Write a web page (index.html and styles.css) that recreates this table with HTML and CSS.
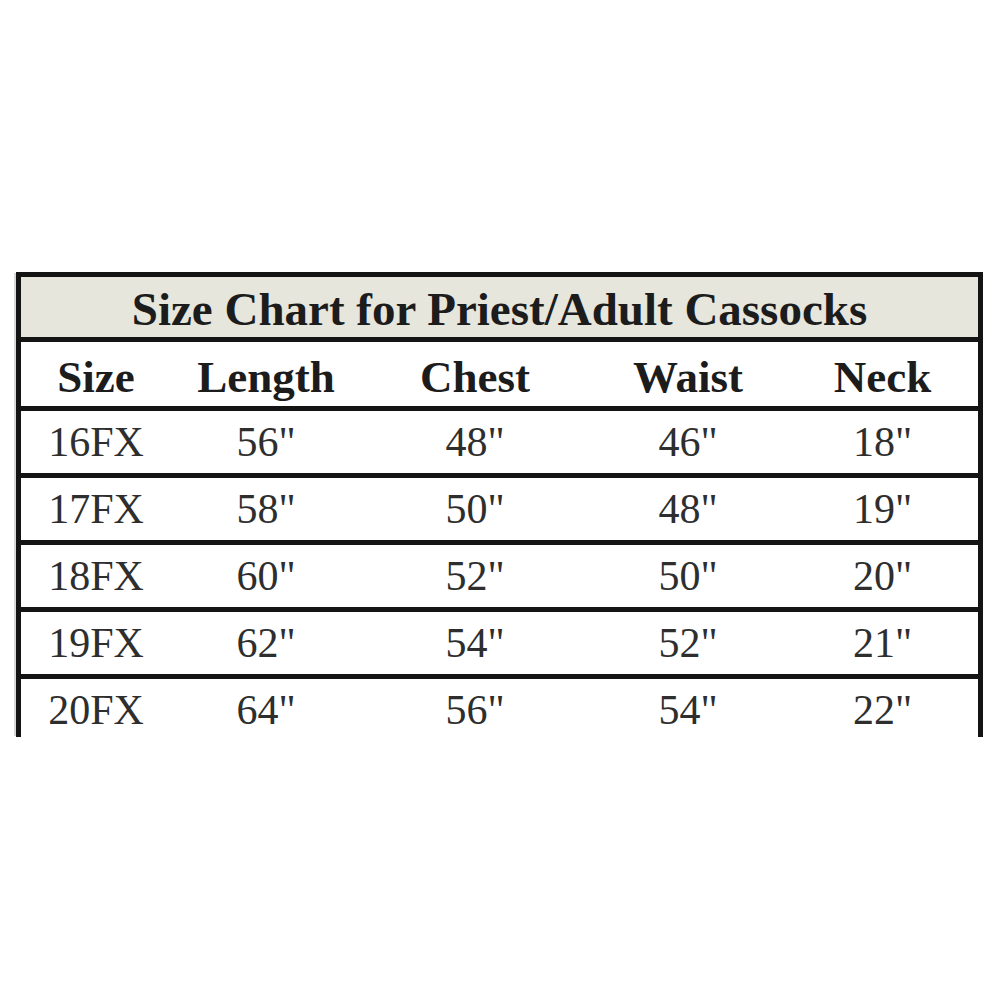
FILE: index.html
```html
<!DOCTYPE html>
<html>
<head>
<meta charset="utf-8">
<link rel="stylesheet" href="styles.css">
</head>
<body>
<div class="chart">
  <div class="title">Size Chart for Priest/Adult Cassocks</div>
  <div class="row head">
    <div>Size</div><div>Length</div><div>Chest</div><div>Waist</div><div>Neck</div>
  </div>
  <div class="row">
    <div>16FX</div><div>56"</div><div>48"</div><div>46"</div><div>18"</div>
  </div>
  <div class="row">
    <div>17FX</div><div>58"</div><div>50"</div><div>48"</div><div>19"</div>
  </div>
  <div class="row">
    <div>18FX</div><div>60"</div><div>52"</div><div>50"</div><div>20"</div>
  </div>
  <div class="row">
    <div>19FX</div><div>62"</div><div>54"</div><div>52"</div><div>21"</div>
  </div>
  <div class="row">
    <div>20FX</div><div>64"</div><div>56"</div><div>54"</div><div>22"</div>
  </div>
</div>
</body>
</html>
```
FILE: styles.css
```css
html, body {
  margin: 0;
  padding: 0;
  background: #ffffff;
}
body {
  padding-top: 272px;
  padding-left: 16px;
  font-family: "Liberation Serif", "Times New Roman", serif;
}
.chart {
  width: 957px;
  height: 460px;
  overflow: hidden;
  border: 5px solid #141414;
  border-bottom: none;
  box-shadow: -3px 0 0 -1px #d8d8d8;
}
.title {
  height: 60px;
  background: #e6e6dd;
  display: flex;
  align-items: center;
  justify-content: center;
  font-weight: bold;
  font-size: 47px;
  line-height: 1;
  color: #1c1c1c;
  padding-top: 4px;
  box-sizing: border-box;
}
.row {
  display: grid;
  grid-template-columns: 150px 190px 228px 198px 191px;
  height: 62px;
  border-top: 5px solid #141414;
  align-items: center;
  font-size: 42px;
  line-height: 1;
  color: #2e2e2e;
}
.row > div {
  text-align: center;
}
.head {
  font-weight: bold;
  font-size: 45px;
  color: #1c1c1c;
  padding-top: 6px;
  height: 58px;
}
```
